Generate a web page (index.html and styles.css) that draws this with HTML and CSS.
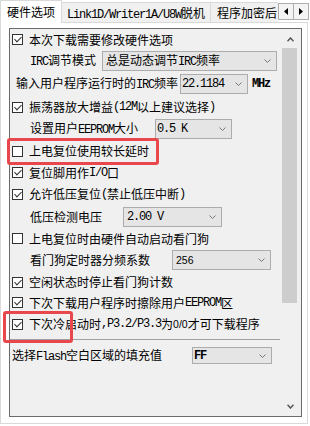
FILE: index.html
```html
<!DOCTYPE html>
<html lang="zh-CN">
<head>
  <meta charset="UTF-8" />
  <title>硬件选项</title>
  <link rel="stylesheet" href="styles.css">
</head>
<body>
  <div class="page">
    <div class="tabs">
      <div class="tab-list">
        <div class="tab active">硬件选项</div>
        <div class="tab link"><span class="e">Link1D/Writer1A/U8W</span>脱机</div>
        <div class="tab">程序加密后</div>
      </div>
      <div class="tab-arrows">
        <div class="arrow"><svg width="4" height="7"><polygon points="4,0 0,3.5 4,7" fill="#000"/></svg></div>
        <div class="arrow"><svg width="4" height="7"><polygon points="0,0 4,3.5 0,7" fill="#000"/></svg></div>
      </div>
    </div>

    <div class="panel">
      <div class="box">
        <div class="content">
          <div class="options">
            <div class="row h21"><span class="cb on"></span>本次下载需要修改硬件选项</div>
            <div class="row h21 field">
              <span class="lbl w72"><span class="e">IRC</span>调节模式</span>
              <div class="sel s175"><span>总是动态调节<span class="e">IRC</span>频率</span><svg width="7" height="4"><polyline points="0.5,0.5 3.5,3.5 6.5,0.5" fill="none" stroke="#777"/></svg></div>
            </div>
            <div class="row h25 field wide">
              <span class="lbl w164">输入用户程序运行时的<span class="e">IRC</span>频率</span>
              <div class="sel s68 tight"><span class="e">22.1184</span><svg width="7" height="4"><polyline points="0.5,0.5 3.5,3.5 6.5,0.5" fill="none" stroke="#777"/></svg></div>
              <span class="e b unit">MHz</span>
            </div>
            <div class="row"><span class="cb on"></span>振荡器放大增益<span class="e">(12M</span>以上建议选择<span class="e">)</span></div>
            <div class="row field">
              <span class="lbl w125">设置用户<span class="e">EEPROM</span>大小</span>
              <div class="sel s77 tight"><span class="e">0.5 K</span><svg width="7" height="4"><polyline points="0.5,0.5 3.5,3.5 6.5,0.5" fill="none" stroke="#777"/></svg></div>
            </div>
            <div class="row"><span class="cb"></span>上电复位使用较长延时</div>
            <div class="row h21"><span class="cb on"></span>复位脚用作<span class="e">I/O</span>口</div>
            <div class="row"><span class="cb on"></span>允许低压复位<span class="e">(</span>禁止低压中断<span class="e">)</span></div>
            <div class="row h23 field">
              <span class="lbl w93">低压检测电压</span>
              <div class="sel s99"><span class="e">2.00 V</span><svg width="7" height="4"><polyline points="0.5,0.5 3.5,3.5 6.5,0.5" fill="none" stroke="#777"/></svg></div>
            </div>
            <div class="row h21"><span class="cb"></span>上电复位时由硬件自动启动看门狗</div>
            <div class="row field">
              <span class="lbl w142">看门狗定时器分频系数</span>
              <div class="sel s99"><span class="s">256</span><svg width="7" height="4"><polyline points="0.5,0.5 3.5,3.5 6.5,0.5" fill="none" stroke="#777"/></svg></div>
            </div>
            <div class="row"><span class="cb on"></span>空闲状态时停止看门狗计数</div>
            <div class="row h19"><span class="cb on"></span>下次下载用户程序时擦除用户<span class="e">EEPROM</span>区</div>
            <div class="row h27"><span class="cb on"></span>下次冷启动时<span class="e">,P3.2/P3.3</span>为<span class="s">0/0</span>才可下载程序</div>
          </div>
          <div class="fill-row">
            <span class="lbl w180">选择<span class="e">Flash</span>空白区域的填充值</span>
            <div class="sel s80 small tight"><span class="e b">FF</span><svg width="7" height="4"><polyline points="0.5,0.5 3.5,3.5 6.5,0.5" fill="none" stroke="#777"/></svg></div>
          </div>
        </div>

        <div class="scroll">
          <div class="sb-btn up"><svg width="7" height="5"><polyline points="0.5,4.2 3.5,1 6.5,4.2" fill="none" stroke="#555" stroke-width="1.5"/></svg></div>
          <div class="thumb"></div>
          <div class="sb-space"></div>
          <div class="sb-btn"><svg width="7" height="5"><polyline points="0.5,0.8 3.5,4 6.5,0.8" fill="none" stroke="#555" stroke-width="1.5"/></svg></div>
        </div>
      </div>
    </div>

    <div class="mark mark-delay"></div>
    <div class="mark mark-p32"></div>
  </div>
</body>
</html>
```

FILE: styles.css
```css
* {
  box-sizing: border-box;
}

body {
  margin: 0;
  background: #ffffff;
  color: #000000;
  font-family: "Noto Sans CJK SC", "Noto Sans", sans-serif;
  font-size: 12px;
  line-height: 1;
}

/* latin text in the old dialog font: narrow mono */
.e {
  font-family: "Liberation Mono", "Noto Sans CJK SC", monospace;
  letter-spacing: -1.2px;
}

.s {
  font-family: "Liberation Sans", sans-serif;
  font-size: 10.5px;
}

.b {
  font-weight: bold;
}

.page {
  position: relative;
  width: 310px;
  height: 426px;
  overflow: hidden;
}

/* tab strip */
.tabs {
  position: relative;
  z-index: 1;
  display: flex;
  height: 23px;
}

.tab-list {
  display: flex;
  align-items: flex-start;
  width: 278px;
  overflow: hidden;
}

.tab {
  flex: none;
  height: 20px;
  margin-top: 2px;
  padding: 0 6px;
  line-height: 19px;
  white-space: nowrap;
  background: #f0f0f0;
  border: 1px solid #d9d9d9;
  border-left: none;
  border-bottom: none;
}

.tab.active {
  width: 62px;
  height: 23px;
  margin-top: 0;
  padding: 0;
  line-height: 21px;
  text-align: center;
  background: #ffffff;
  border-left: 1px solid #d9d9d9;
}

.tab.link {
  width: 149px;
  padding: 0;
  text-align: center;
}

.tab-arrows {
  display: flex;
  margin-top: 3px;
  height: 17px;
}

.arrow {
  display: flex;
  align-items: center;
  justify-content: center;
  width: 16px;
  height: 17px;
  background: #f4f4f4;
  border: 1px solid #adadad;
}

.arrow + .arrow {
  margin-left: -1px;
}

/* tab page */
.panel {
  margin-top: -1px;
  width: 308px;
  height: 402px;
  padding: 5px 5px 6px 8px;
  background: #ffffff;
  border: 1px solid #d9d9d9;
}

.box {
  display: flex;
  height: 100%;
  background: #f0f0f0;
  border: 1px solid #6b6b6b;
}

.content {
  display: flex;
  flex-direction: column;
  width: 272px;
}

.options {
  height: 311px;
  margin-right: 2px;
  border-bottom: 1px solid #a0a0a0;
}

.row {
  display: flex;
  align-items: center;
  height: 22px;
  padding-left: 2px;
  white-space: nowrap;
}

.h19 { height: 19px; }
.h21 { height: 21px; }
.h23 { height: 23px; }
.h25 { height: 25px; }
.h27 { height: 27px; padding-bottom: 3px; }

.cb {
  position: relative;
  flex: none;
  width: 11px;
  height: 11px;
  margin-right: 6px;
  background: #ffffff;
  border: 1px solid #333333;
}

.cb.on::after {
  content: "";
  position: absolute;
  left: 3px;
  top: 0;
  width: 3px;
  height: 6px;
  border: solid #333333;
  border-width: 0 1.2px 1.2px 0;
  transform: rotate(45deg);
}

.field {
  padding-left: 20px;
}

.field.wide {
  padding-left: 6px;
}

.lbl {
  flex: none;
}

.w72 { width: 72px; }
.w93 { width: 93px; }
.w125 { width: 125px; }
.w142 { width: 142px; }
.w164 { width: 164px; }
.w180 { width: 180px; }

.sel {
  flex: none;
  display: flex;
  align-items: center;
  justify-content: space-between;
  height: 20px;
  padding: 0 5px 0 3px;
  background: #e5e5e5;
  border: 1px solid #acacac;
}

.sel.tight {
  padding-left: 1px;
}

.sel.small {
  height: 17px;
}

.sel svg {
  flex: none;
}

.s68 { width: 68px; }
.s77 { width: 77px; }
.s80 { width: 80px; }
.s99 { width: 99px; }
.s175 { width: 175px; }

.unit {
  margin-left: 4px;
}

.fill-row {
  display: flex;
  align-items: center;
  height: 31px;
  padding-left: 2px;
  white-space: nowrap;
}

/* scrollbar */
.scroll {
  display: flex;
  flex-direction: column;
  width: 19px;
}

.sb-btn {
  display: flex;
  align-items: center;
  justify-content: center;
  height: 19px;
  padding-right: 3px;
}

.sb-btn.up {
  padding-top: 2px;
}

.thumb {
  width: 15px;
  height: 255px;
  background: #cdcdcd;
}

.sb-space {
  flex: 1;
}

/* red annotation frames */
.mark {
  position: absolute;
  border: 3px solid #e8474c;
  border-radius: 3px;
}

.mark-delay {
  left: 7px;
  top: 138px;
  width: 152px;
  height: 27px;
}

.mark-p32 {
  left: 3px;
  top: 311px;
  width: 70px;
  height: 32px;
}
```
